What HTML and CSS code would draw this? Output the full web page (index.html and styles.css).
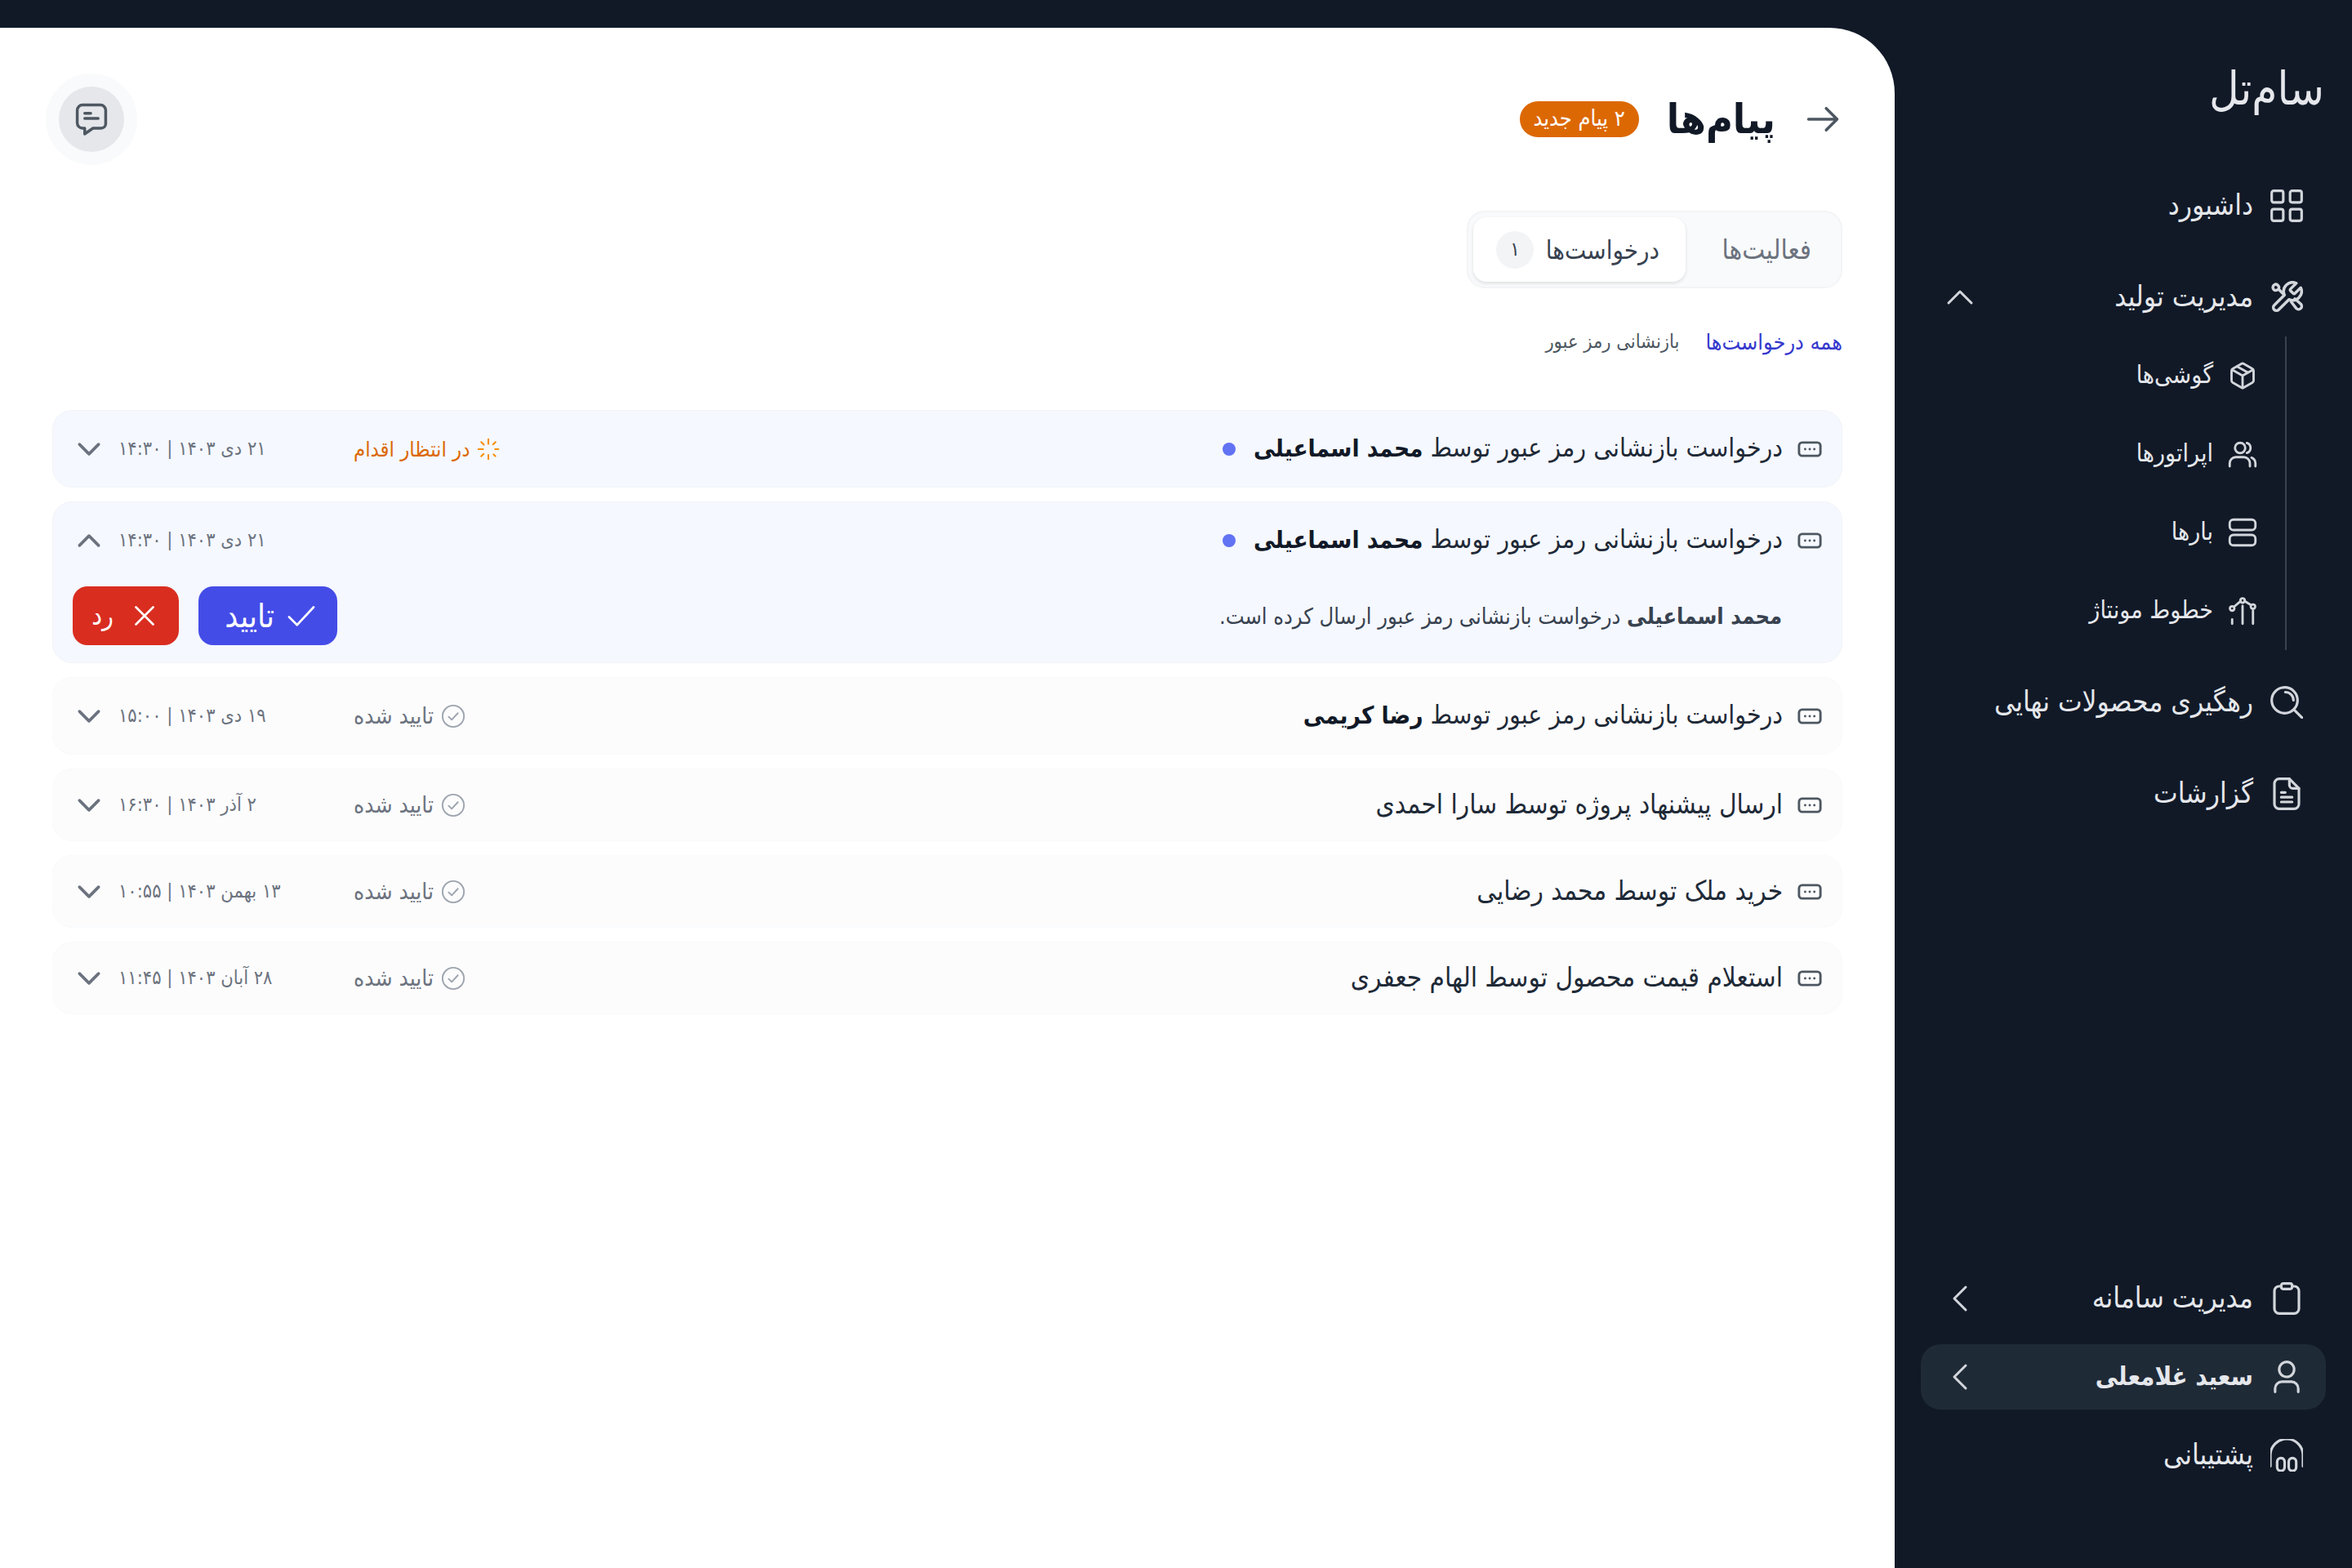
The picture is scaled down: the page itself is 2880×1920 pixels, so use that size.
FILE: index.html
```html
<!DOCTYPE html>
<html lang="fa" dir="rtl">
<head>
    <meta charset="UTF-8">
    <meta name="viewport" content="width=device-width, initial-scale=1.0">
    <title>پیام‌ها</title>
    <link rel="stylesheet" href="styles.css">
</head>
<body>

<svg class="icon-defs" xmlns="http://www.w3.org/2000/svg">
    <symbol id="i-grid" viewBox="0 0 24 24"><rect x="1" y="1" width="8.500" height="8.500" rx="1.500"/><rect x="14.500" y="1" width="8.500" height="8.500" rx="1.500"/><rect x="1" y="14.500" width="8.500" height="8.500" rx="1.500"/><rect x="14.500" y="14.500" width="8.500" height="8.500" rx="1.500"/></symbol>
    <symbol id="i-tool" viewBox="1 1 22 22"><path d="M14.700 6.300a1 1 0 0 0 0 1.400l1.600 1.600a1 1 0 0 0 1.400 0l3.770-3.770a6 6 0 0 1-7.940 7.940l-6.910 6.910a2.120 2.120 0 0 1-3-3l6.910-6.910a6 6 0 0 1 7.940-7.940z"/><path d="M9.500 9.500 6.500 6.500M6.200 6.700a2 2 0 1 1-2.600-3 2 2 0 0 1 2.600 3zM15 15l3.500 4.500a2.100 2.100 0 0 0 3-3L17.500 13"/></symbol>
    <symbol id="i-box" viewBox="0 0 24 24"><path d="M21 8a2 2 0 0 0-1-1.700l-7-4a2 2 0 0 0-2 0l-7 4A2 2 0 0 0 3 8v8a2 2 0 0 0 1 1.700l7 4a2 2 0 0 0 2 0l7-4a2 2 0 0 0 1-1.700z"/><path d="M3.500 7.200 12 12l8.500-4.800M12 22V12M7.500 4.500l9 5"/></symbol>
    <symbol id="i-users" viewBox="0 0 24 24"><circle cx="10" cy="7" r="4.200"/><path d="M15.500 2.900a4.300 4.300 0 0 1 0 8.200M1.500 22v-2.500a5 5 0 0 1 5-5h6.500a5 5 0 0 1 5 5V22M22.500 22v-2.500a5 5 0 0 0-3.200-4.600"/></symbol>
    <symbol id="i-server" viewBox="0 0 24 24"><rect x="1.500" y="1.500" width="21" height="8.500" rx="3"/><rect x="1.500" y="14" width="21" height="8.500" rx="3"/></symbol>
    <symbol id="i-lines" viewBox="0 0 24 24"><path d="M3.500 19v3.500M12 8v14.500M20.500 12v10.500M5.200 8.500 10.200 4.200M13.900 4.200 18.800 7.200"/><circle cx="3.500" cy="10" r="1.800"/><circle cx="12" cy="3.500" r="1.800"/><circle cx="20.500" cy="8.500" r="1.800"/></symbol>
    <symbol id="i-search" viewBox="0 0 24 24"><circle cx="10.500" cy="10.500" r="9.500"/><path d="M17.300 17.300 23.500 23.500M11 4.500a6 6 0 0 1 6 6"/></symbol>
    <symbol id="i-file" viewBox="0 0 24 24"><path d="M14 1H6.500A3.500 3.500 0 0 0 3 4.500v15A3.500 3.500 0 0 0 6.500 23h11a3.500 3.500 0 0 0 3.500-3.500V8z"/><path d="M14 1v4.500A2.500 2.500 0 0 0 16.500 8H21M8 11h3M8 14.500h8M8 18h8"/></symbol>
    <symbol id="i-clipboard" viewBox="0 0 24 24"><path d="M8 3H6.500A3.500 3.500 0 0 0 3 6.500v13A3.500 3.500 0 0 0 6.500 23h11a3.500 3.500 0 0 0 3.500-3.500v-13A3.500 3.500 0 0 0 17.500 3H16"/><rect x="8" y="1" width="8" height="4" rx="1.500"/></symbol>
    <symbol id="i-user" viewBox="0 0 24 24"><circle cx="12" cy="6.500" r="5.500"/><path d="M3.500 23v-2.500a5 5 0 0 1 5-5h7a5 5 0 0 1 5 5V23"/></symbol>
    <symbol id="i-headphones" viewBox="0 0 24 24"><path d="M0 20v-8a12 12 0 0 1 24 0v8"/><rect x="5" y="14" width="5.500" height="9.500" rx="2.750"/><rect x="13.500" y="14" width="5.500" height="9.500" rx="2.750"/></symbol>
    <symbol id="i-chat" viewBox="0 0 24 24"><path d="M6 2.500h12A3.500 3.500 0 0 1 21.500 6v9a3 3 0 0 1-3 3H13l-5.500 3.800V18H6a3.500 3.500 0 0 1-3.500-3.500V6A3.500 3.500 0 0 1 6 2.500z"/><path d="M7.500 8h4M7.500 11.500h9"/></symbol>
    <symbol id="i-dots" viewBox="0 0 24 24"><rect x="1.500" y="5.500" width="21" height="13" rx="3"/><path d="M7.500 12h.01M12 12h.01M16.500 12h.01"/></symbol>
    <symbol id="i-down" viewBox="0 0 24 24"><path d="m5 8.500 7 7 7-7"/></symbol>
    <symbol id="i-up" viewBox="0 0 24 24"><path d="m5 15.500 7-7 7 7"/></symbol>
    <symbol id="i-left" viewBox="0 0 24 24"><path d="m15.500 5-7 7 7 7"/></symbol>
    <symbol id="i-arrow" viewBox="0 0 24 24"><path d="M1.500 12h21M14.500 4l8 8-8 8"/></symbol>
    <symbol id="i-check" viewBox="0 0 24 24"><path d="m2 13 6.500 6.500L22 5"/></symbol>
    <symbol id="i-x" viewBox="0 0 24 24"><path d="M5 5l14 14M19 5 5 19"/></symbol>
    <symbol id="i-check-circle" viewBox="0 0 24 24"><circle cx="12" cy="12" r="10.500"/><path d="m7.500 12.500 3 3 6-6.500"/></symbol>
    <symbol id="i-spinner" viewBox="0 0 24 24"><path d="M12 1.500v5M12 18v4.500M1.500 12h5M19 12h3.500M4.500 4.500l2.800 2.800M17.500 17.500l1.800 1.800M19.500 4.500l-2.500 2.500M7 17l-2.500 2.500"/></symbol>
</svg>

<div class="app">
    <aside class="sidebar">
        <div class="logo">سام‌تل</div>

        <nav class="nav">
            <a class="nav-item"><svg class="nav-icon"><use href="#i-grid"/></svg><span>داشبورد</span></a>
            <a class="nav-item"><svg class="nav-icon"><use href="#i-tool"/></svg><span>مدیریت تولید</span><svg class="nav-chevron"><use href="#i-up"/></svg></a>
            <div class="sub-list">
                <a class="sub-item"><svg class="sub-icon"><use href="#i-box"/></svg><span>گوشی‌ها</span></a>
                <a class="sub-item"><svg class="sub-icon"><use href="#i-users"/></svg><span>اپراتورها</span></a>
                <a class="sub-item"><svg class="sub-icon"><use href="#i-server"/></svg><span>بارها</span></a>
                <a class="sub-item"><svg class="sub-icon"><use href="#i-lines"/></svg><span>خطوط مونتاژ</span></a>
            </div>
            <a class="nav-item"><svg class="nav-icon"><use href="#i-search"/></svg><span>رهگیری محصولات نهایی</span></a>
            <a class="nav-item"><svg class="nav-icon"><use href="#i-file"/></svg><span>گزارشات</span></a>
        </nav>

        <nav class="nav-bottom">
            <a class="nav-item"><svg class="nav-icon"><use href="#i-clipboard"/></svg><span>مدیریت سامانه</span><svg class="nav-chevron"><use href="#i-left"/></svg></a>
            <a class="nav-item active"><svg class="nav-icon"><use href="#i-user"/></svg><span>سعید غلامعلی</span><svg class="nav-chevron"><use href="#i-left"/></svg></a>
            <a class="nav-item"><svg class="nav-icon"><use href="#i-headphones"/></svg><span>پشتیبانی</span></a>
        </nav>
    </aside>

    <main class="main">
        <header class="page-header">
            <div class="title-group">
                <svg class="back-icon"><use href="#i-arrow"/></svg>
                <h1>پیام‌ها</h1>
                <span class="badge">۲ پیام جدید</span>
            </div>
            <button class="chat-button"><svg class="chat-icon"><use href="#i-chat"/></svg></button>
        </header>

        <div class="tabs">
            <div class="tab">فعالیت‌ها</div>
            <div class="tab active">درخواست‌ها <span class="tab-count">۱</span></div>
        </div>

        <div class="filters">
            <a class="filter-link">همه درخواست‌ها</a>
            <span class="filter-text">بازنشانی رمز عبور</span>
        </div>

        <div class="message-list">
            <div class="message unread">
                <div class="message-head">
                    <svg class="message-icon"><use href="#i-dots"/></svg>
                    <div class="message-title">درخواست بازنشانی رمز عبور توسط <strong>محمد اسماعیلی</strong></div>
                    <span class="unread-dot"></span>
                    <div class="status pending"><svg class="status-spinner"><use href="#i-spinner"/></svg>در انتظار اقدام</div>
                    <div class="date">۲۱ دی ۱۴۰۳ | ۱۴:۳۰</div>
                    <svg class="toggle"><use href="#i-down"/></svg>
                </div>
            </div>

            <div class="message unread">
                <div class="message-head">
                    <svg class="message-icon"><use href="#i-dots"/></svg>
                    <div class="message-title">درخواست بازنشانی رمز عبور توسط <strong>محمد اسماعیلی</strong></div>
                    <span class="unread-dot"></span>
                    <div class="status"></div>
                    <div class="date">۲۱ دی ۱۴۰۳ | ۱۴:۳۰</div>
                    <svg class="toggle"><use href="#i-up"/></svg>
                </div>
                <div class="message-body">
                    <p><strong>محمد اسماعیلی</strong> درخواست بازنشانی رمز عبور ارسال کرده است.</p>
                    <div class="actions">
                        <button class="btn btn-approve"><svg class="btn-icon"><use href="#i-check"/></svg>تایید</button>
                        <button class="btn btn-reject"><svg class="btn-icon"><use href="#i-x"/></svg>رد</button>
                    </div>
                </div>
            </div>

            <div class="message">
                <div class="message-head">
                    <svg class="message-icon"><use href="#i-dots"/></svg>
                    <div class="message-title">درخواست بازنشانی رمز عبور توسط <strong>رضا کریمی</strong></div>
                    <div class="status"><svg class="status-check"><use href="#i-check-circle"/></svg>تایید شده</div>
                    <div class="date">۱۹ دی ۱۴۰۳ | ۱۵:۰۰</div>
                    <svg class="toggle"><use href="#i-down"/></svg>
                </div>
            </div>

            <div class="message compact">
                <div class="message-head">
                    <svg class="message-icon"><use href="#i-dots"/></svg>
                    <div class="message-title">ارسال پیشنهاد پروژه توسط سارا احمدی</div>
                    <div class="status"><svg class="status-check"><use href="#i-check-circle"/></svg>تایید شده</div>
                    <div class="date">۲ آذر ۱۴۰۳ | ۱۶:۳۰</div>
                    <svg class="toggle"><use href="#i-down"/></svg>
                </div>
            </div>

            <div class="message compact">
                <div class="message-head">
                    <svg class="message-icon"><use href="#i-dots"/></svg>
                    <div class="message-title">خرید ملک توسط محمد رضایی</div>
                    <div class="status"><svg class="status-check"><use href="#i-check-circle"/></svg>تایید شده</div>
                    <div class="date">۱۳ بهمن ۱۴۰۳ | ۱۰:۵۵</div>
                    <svg class="toggle"><use href="#i-down"/></svg>
                </div>
            </div>

            <div class="message compact">
                <div class="message-head">
                    <svg class="message-icon"><use href="#i-dots"/></svg>
                    <div class="message-title">استعلام قیمت محصول توسط الهام جعفری</div>
                    <div class="status"><svg class="status-check"><use href="#i-check-circle"/></svg>تایید شده</div>
                    <div class="date">۲۸ آبان ۱۴۰۳ | ۱۱:۴۵</div>
                    <svg class="toggle"><use href="#i-down"/></svg>
                </div>
            </div>
        </div>
    </main>
</div>

</body>
</html>
```

FILE: styles.css
```css
* {
    box-sizing: border-box;
}

body {
    margin: 0;
    background-color: #111927;
    font-family: "DejaVu Sans Condensed", "DejaVu Sans", sans-serif;
    color: #1f2a37;
}

svg {
    fill: none;
    stroke: currentColor;
    stroke-linecap: round;
    stroke-linejoin: round;
    flex-shrink: 0;
    overflow: visible;
}

.icon-defs {
    display: none;
}

.app {
    display: flex;
    height: 1920px;
    overflow: hidden;
}

/* Sidebar */
.sidebar {
    width: 560px;
    flex-shrink: 0;
    display: flex;
    flex-direction: column;
    padding: 64px 32px 98px;
    color: #e5e7eb;
}

.logo {
    height: 96px;
    line-height: 90px;
    margin: 0 2px 52px 0;
    font-size: 56px;
    font-weight: 500;
}

.nav-item {
    display: flex;
    align-items: center;
    gap: 21px;
    height: 80px;
    padding: 0 28px;
    border-radius: 24px;
    font-size: 35px;
    margin-bottom: 32px;
}

.nav-item span {
    margin-bottom: 3px;
}

.nav-item.active {
    background-color: #1f2a37;
    font-weight: bold;
    font-size: 31px;
}

.nav-icon {
    width: 40px;
    height: 40px;
    stroke-width: 1.900;
    color: #d2d6db;
}

.nav-chevron {
    width: 48px;
    height: 48px;
    stroke-width: 1.500;
    margin: 0 auto 0 -4px;
    color: #d2d6db;
}

.sub-list {
    margin: -24px 48px 24px 0;
    padding-right: 34px;
    border-right: 2px solid #384250;
}

.sub-item {
    display: flex;
    align-items: center;
    gap: 18px;
    height: 96px;
    font-size: 30px;
}

.sub-item span {
    margin-bottom: 3px;
}

.sub-icon {
    width: 36px;
    height: 36px;
    stroke-width: 1.900;
    color: #d2d6db;
}

.nav-bottom {
    margin-top: auto;
}

.nav-bottom .nav-item {
    margin-bottom: 16px;
}

.nav-bottom .nav-item:last-child {
    margin-bottom: 0;
}

/* Main panel */
.main {
    flex: 1;
    margin-top: 34px;
    padding: 72px 64px 0;
    background-color: #fff;
    border-top-right-radius: 80px;
}

.page-header {
    display: flex;
    justify-content: space-between;
    align-items: center;
    height: 80px;
}

.title-group {
    display: flex;
    align-items: center;
}

.back-icon {
    width: 40px;
    height: 40px;
    stroke-width: 2.100;
    color: #4d5761;
    margin: 0 4px 0 38px;
}

h1 {
    margin: 0 0 0 34px;
    font-size: 50px;
    font-weight: bold;
    color: #111927;
}

.badge {
    height: 44px;
    line-height: 42px;
    padding: 0 17px;
    border-radius: 22px;
    background-color: #dc6803;
    color: #fff;
    font-size: 27px;
}

.chat-button {
    width: 80px;
    height: 80px;
    margin-left: 8px;
    padding: 0;
    border: none;
    border-radius: 50%;
    background-color: #e5e7eb;
    box-shadow: 0 0 0 16px #f9fafb;
    color: #4d5761;
    display: flex;
    align-items: center;
    justify-content: center;
}

.chat-icon {
    width: 44px;
    height: 44px;
    stroke-width: 1.900;
}

.tabs {
    display: flex;
    width: 460px;
    height: 95px;
    margin-top: 72px;
    padding: 6px;
    border: 2px solid #f3f4f6;
    border-radius: 22px;
    background-color: #f9fafb;
}

.tab {
    display: flex;
    align-items: center;
    padding: 0 30px 0 0;
    flex: 1;
    font-size: 33px;
    color: #6c737f;
}

.tab.active {
    flex: none;
    width: 260px;
    padding: 0 32px 0 28px;
    justify-content: space-between;
    border-radius: 16px;
    background-color: #fff;
    box-shadow: 0 2px 4px rgba(16, 24, 40, 0.12);
    font-size: 31px;
    color: #384250;
}

.tab-count {
    width: 46px;
    height: 46px;
    line-height: 44px;
    text-align: center;
    border-radius: 50%;
    background-color: #f3f4f6;
    font-size: 24px;
}

.filters {
    display: flex;
    gap: 32px;
    align-items: center;
    height: 40px;
    margin-top: 45px;
    font-size: 23.500px;
}

.filter-link {
    font-size: 26.800px;
    color: #3538cd;
}

.filter-text {
    color: #4d5761;
}

/* Messages */
.message-list {
    display: flex;
    flex-direction: column;
    gap: 17px;
    margin-top: 64px;
}

.message {
    padding: 0 24px;
    border: 1px solid #f9fafb;
    border-radius: 24px;
    background-color: #fcfcfd;
}

.message.unread {
    background-color: #f5f8ff;
    border-color: #f2f4f7;
}

.message-head {
    display: flex;
    align-items: center;
    height: 93px;
}

.message.compact .message-head {
    height: 87px;
}

.message-icon {
    width: 30px;
    height: 30px;
    stroke-width: 2.300;
    color: #4d5761;
    margin-left: 18px;
}

.message-title {
    margin-bottom: 3px;
    font-size: 31.700px;
}

.message.compact .message-title {
    font-size: 33px;
}

.message-title strong {
    font-size: 29.500px;
    color: #111927;
}

.unread-dot {
    width: 16px;
    height: 16px;
    margin-right: 22px;
    border-radius: 50%;
    background-color: #6172f3;
}

.status {
    display: flex;
    align-items: center;
    justify-content: flex-end;
    gap: 9px;
    width: 180px;
    margin-right: auto;
    font-size: 28px;
    color: #6c737f;
}

.status.pending {
    font-size: 25.500px;
    color: #dc6803;
}

.status-spinner {
    width: 28px;
    height: 28px;
    stroke-width: 1.800;
    color: #f79009;
}

.status-check {
    width: 30px;
    height: 30px;
    stroke-width: 1.500;
    color: #9da4ae;
}

.date {
    width: 288px;
    margin-bottom: 2px;
    text-align: left;
    font-size: 23.500px;
    color: #6c737f;
}

.toggle {
    width: 40px;
    height: 40px;
    margin-right: 16px;
    stroke-width: 2.200;
    color: #6c737f;
}

.message-body {
    display: flex;
    justify-content: space-between;
    align-items: center;
    padding: 10px 49px 21px 0;
}

.message-body p {
    margin: 0;
    font-size: 27px;
    color: #384250;
}

.actions {
    display: flex;
    gap: 24px;
}

.btn {
    display: flex;
    align-items: center;
    height: 72px;
    border: none;
    border-radius: 18px;
    color: #fff;
    font-family: inherit;
}

.btn-approve {
    gap: 15px;
    width: 170px;
    padding: 0 26px 0 0;
    background-color: #444ce7;
    font-size: 40px;
}

.btn-reject {
    gap: 20px;
    width: 130px;
    padding: 0 24px 0 0;
    background-color: #d92d20;
    font-size: 32px;
}

.btn-icon {
    width: 36px;
    height: 36px;
    stroke-width: 1.800;
}
```
